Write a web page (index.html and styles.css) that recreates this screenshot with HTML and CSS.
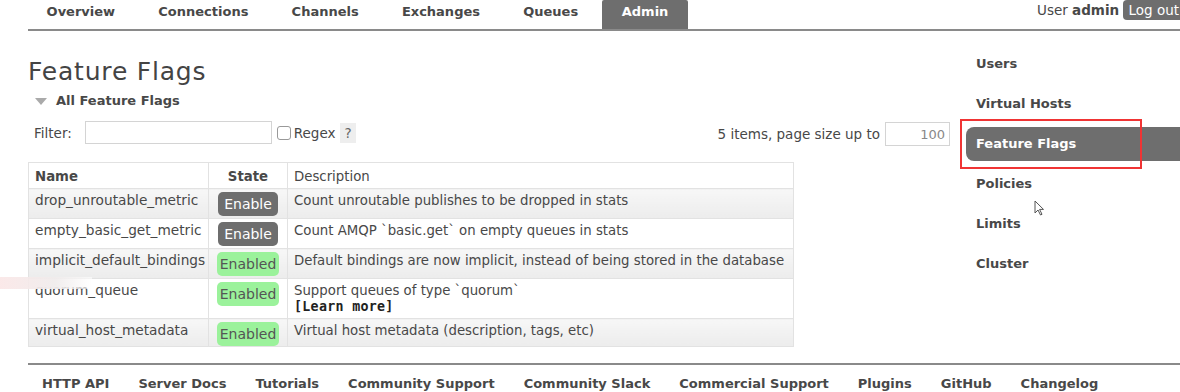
FILE: index.html
```html
<!DOCTYPE html>
<html lang="en">
<head>
    <meta charset="UTF-8">
    <title>RabbitMQ Management - Feature Flags</title>
    <link rel="stylesheet" href="styles.css">
</head>
<body>
    <div class="header">
        <ul class="tabs">
            <li>Overview</li>
            <li>Connections</li>
            <li>Channels</li>
            <li>Exchanges</li>
            <li>Queues</li>
            <li class="selected">Admin</li>
        </ul>
        <div class="login">
            User <b>admin</b>
            <span class="logout">Log out</span>
        </div>
    </div>

    <div class="page">
        <div class="main">
            <h1>Feature Flags</h1>
            <h2><span class="arrow"></span>All Feature Flags</h2>

            <div class="filter-row">
                <div class="filter">
                    <label>Filter:</label>
                    <input type="text" class="filter-input">
                    <span class="check"></span>
                    <span>Regex</span>
                    <span class="help">?</span>
                </div>
                <div class="paging">
                    5 items, page size up to
                    <input type="text" class="page-size" value="100">
                </div>
            </div>

            <table class="list">
                <thead>
                    <tr>
                        <th class="c-name">Name</th>
                        <th class="c-state">State</th>
                        <th class="c-desc">Description</th>
                    </tr>
                </thead>
                <tbody>
                    <tr class="alt1">
                        <td class="name">drop_unroutable_metric</td>
                        <td class="state"><span class="btn">Enable</span></td>
                        <td>Count unroutable publishes to be dropped in stats</td>
                    </tr>
                    <tr class="alt2">
                        <td class="name">empty_basic_get_metric</td>
                        <td class="state"><span class="btn">Enable</span></td>
                        <td>Count AMQP `basic.get` on empty queues in stats</td>
                    </tr>
                    <tr class="alt1">
                        <td class="name">implicit_default_bindings</td>
                        <td class="state"><span class="green">Enabled</span></td>
                        <td>Default bindings are now implicit, instead of being stored in the database</td>
                    </tr>
                    <tr class="alt2">
                        <td class="name">quorum_queue</td>
                        <td class="state"><span class="green">Enabled</span></td>
                        <td>Support queues of type `quorum`<br><b class="mono">[Learn more]</b></td>
                    </tr>
                    <tr class="alt1 last">
                        <td class="name">virtual_host_metadata</td>
                        <td class="state"><span class="green">Enabled</span></td>
                        <td>Virtual host metadata (description, tags, etc)</td>
                    </tr>
                </tbody>
            </table>
        </div>

        <ul class="sidebar">
            <li>Users</li>
            <li>Virtual Hosts</li>
            <li class="selected">Feature Flags</li>
            <li>Policies</li>
            <li>Limits</li>
            <li>Cluster</li>
        </ul>
    </div>

    <ul class="footer">
        <li>HTTP API</li>
        <li>Server Docs</li>
        <li>Tutorials</li>
        <li>Community Support</li>
        <li>Community Slack</li>
        <li>Commercial Support</li>
        <li>Plugins</li>
        <li>GitHub</li>
        <li>Changelog</li>
    </ul>

    <!-- screenshot annotations -->
    <div class="highlight"></div>
    <div class="smudge"></div>
    <svg class="cursor" width="11" height="17" viewBox="0 0 11 17">
        <path d="M1 1 L1 13 L4 10 L6.5 15 L8 14.3 L5.6 9.4 L9.5 9.4 Z" fill="#fff" stroke="#555" stroke-width="1" stroke-linejoin="round" />
    </svg>
</body>
</html>
```

FILE: styles.css
```css
body {
    margin: 0;
    font-family: "DejaVu Sans", Verdana, sans-serif;
    color: #484848;
    background: #fff;
    width: 1180px;
    height: 392px;
    overflow: hidden;
    position: relative;
}
ul {
    list-style: none;
    margin: 0;
    padding: 0;
}

/* top tabs */
.header {
    display: flex;
    justify-content: space-between;
    margin-left: 28px;
    height: 29px;
    border-bottom: 2px solid #8a8a8a;
}
.tabs {
    display: flex;
    margin-left: -3px;
}
.tabs li {
    font-size: 13px;
    font-weight: bold;
    line-height: 24px;
    padding: 0 21.6px;
    color: #484848;
}
.tabs li.selected {
    background: #6e6e6e;
    color: #fff;
    height: 29px;
    padding: 0 20px;
    border-radius: 2px 2px 0 0;
    margin-left: 2px;
}
.login {
    font-size: 13.5px;
    color: #484848;
    white-space: nowrap;
    line-height: 20px;
    flex-shrink: 0;
    margin-right: -4px;
}
.logout {
    display: inline-block;
    background: #6e6e6e;
    color: #fff;
    padding: 0 5px;
    border-radius: 4px;
    line-height: 20px;
}

/* page body */
.page {
    display: flex;
    align-items: flex-start;
}
.main {
    margin-left: 28px;
    width: 922px;
    flex-shrink: 0;
}
h1 {
    font-size: 25px;
    letter-spacing: 0.8px;
    font-weight: normal;
    color: #444;
    line-height: 30px;
    margin: 26px 0 0;
}
h2 {
    font-size: 13px;
    font-weight: bold;
    line-height: 16px;
    margin: 6px 0 0 7px;
    color: #484848;
    display: flex;
    align-items: center;
}
.arrow {
    width: 0;
    height: 0;
    border-left: 6px solid transparent;
    border-right: 6px solid transparent;
    border-top: 7px solid #aaa;
    margin-right: 9px;
}

.filter-row {
    display: flex;
    justify-content: space-between;
    align-items: center;
    font-size: 13.5px;
    color: #484848;
    margin-top: 10px;
}
.filter {
    display: flex;
    align-items: center;
    margin-left: 6px;
}
.filter label {
    margin-right: 13px;
}
.filter-input {
    width: 183px;
    height: 19px;
    border: 1px solid #d4d4d4;
    padding: 1px;
    margin: 0;
}
.check {
    width: 12px;
    height: 12px;
    border: 1px solid #999;
    border-radius: 3px;
    margin: 0 3px 0 5px;
}
.help {
    background: #eee;
    color: #666;
    padding: 2px 4px;
    margin-left: 5px;
    line-height: 16px;
}
.paging {
    display: flex;
    align-items: center;
    gap: 5px;
    margin-top: 3px;
}
.page-size {
    width: 55px;
    height: 20px;
    border: 1px solid #d4d4d4;
    padding: 1px 4px;
    margin: 0;
    font-family: "DejaVu Sans", Verdana, sans-serif;
    font-size: 13px;
    color: #888;
    text-align: right;
}

/* table */
table.list {
    border-collapse: collapse;
    table-layout: fixed;
    width: 766px;
    margin-top: 16px;
    font-size: 13.3px;
    color: #484848;
}
table.list th,
table.list td {
    border: 1px solid #e2e2e2;
    padding: 4px 6px 3px;
    text-align: left;
    vertical-align: top;
    line-height: 16px;
    white-space: nowrap;
    overflow: visible;
}
table.list th {
    padding: 6px 6px 3px;
}
table.list td.name {
    font-size: 13.7px;
    padding-top: 3px;
}
th.c-name { width: 180px; box-sizing: border-box; }
th.c-state { width: 79px; box-sizing: border-box; text-align: center !important; }
th.c-desc { font-weight: normal; }
td.state {
    text-align: center !important;
    padding: 3px 0 2px !important;
}
tr.last td.state {
    padding-bottom: 0 !important;
}
tr.alt1 td {
    background: linear-gradient(#f7f7f7, #ececec);
}
tr.alt2 td {
    background: #fff;
}
.btn {
    display: inline-block;
    background: #6e6e6e;
    color: #fff;
    font-size: 14px;
    line-height: 24px;
    padding: 0 6px;
    border-radius: 5px;
}
.green {
    display: inline-block;
    background: #9bf29b;
    color: #555;
    font-size: 14px;
    line-height: 24px;
    padding: 0 3px;
    border-radius: 5px;
}
.mono {
    font-family: "DejaVu Sans Mono", monospace;
    font-size: 13.3px;
    letter-spacing: 0.3px;
    line-height: 16px;
    color: #222;
}

/* sidebar */
.sidebar {
    margin-left: 16px;
    margin-top: 16px;
    width: 230px;
    flex-shrink: 0;
}
.sidebar li {
    font-size: 13px;
    font-weight: bold;
    color: #484848;
    line-height: 34px;
    padding-left: 10px;
    margin-bottom: 6px;
}
.sidebar li.selected {
    background: #6e6e6e;
    color: #fff;
    border-radius: 8px 0 0 8px;
}

/* footer */
.footer {
    position: absolute;
    left: 28px;
    top: 363px;
    width: 1152px;
    border-top: 2px solid #8a8a8a;
    display: flex;
    padding-top: 11px;
}
.footer li {
    font-size: 13px;
    font-weight: bold;
    color: #484848;
    padding: 0 15px 0 14px;
    white-space: nowrap;
}

/* annotations lying over the screenshot */
.highlight {
    position: absolute;
    left: 960px;
    top: 119px;
    width: 178px;
    height: 46px;
    border: 2px solid #f03434;
}
.smudge {
    position: absolute;
    left: 0;
    top: 277px;
    width: 92px;
    height: 12px;
    background: linear-gradient(90deg, rgba(250, 230, 230, 0.9), rgba(240, 236, 236, 0.95) 60%, rgba(255, 255, 255, 0.6));
}
.cursor {
    position: absolute;
    left: 1034px;
    top: 200px;
}
```
